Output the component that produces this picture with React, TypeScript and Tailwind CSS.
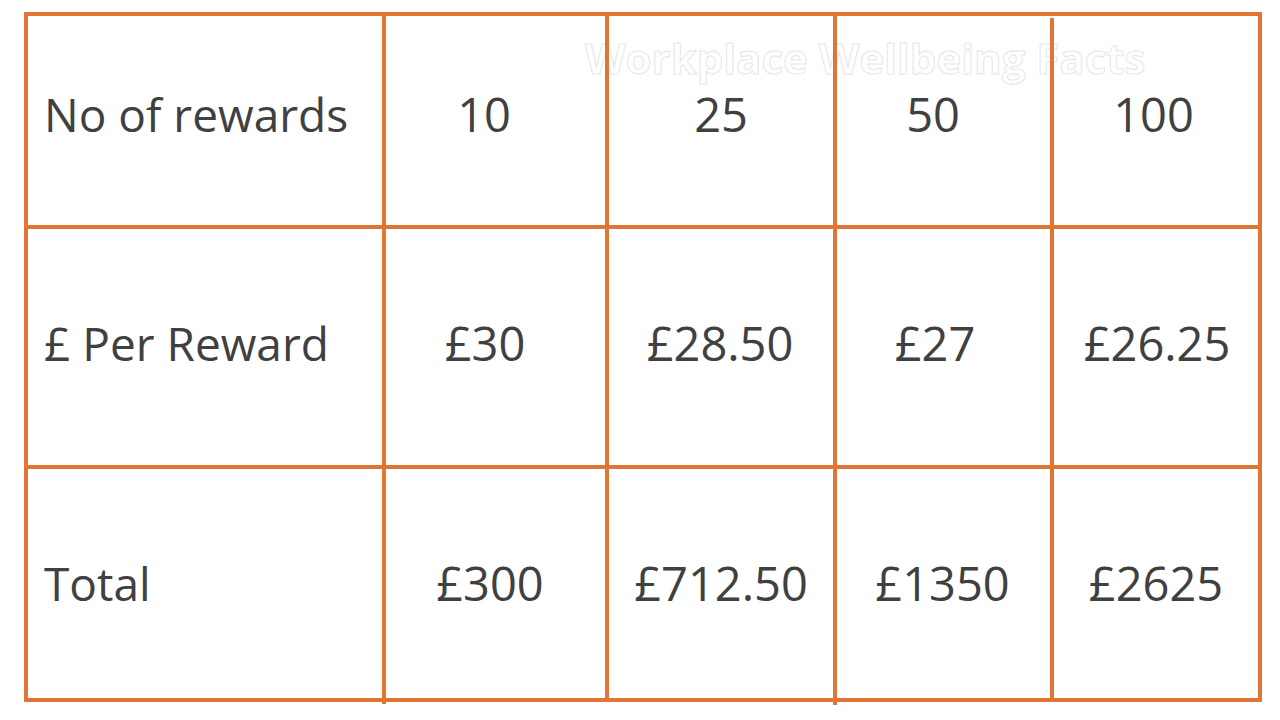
import React from "react";

const ORANGE = "border-[#e07535]";

type Cell = { text: string; cls?: string };

const rows: { label: string; rowCls: string; cells: Cell[] }[] = [
  {
    label: "No of rewards",
    rowCls: "pb-[12px]",
    cells: [
      { text: "10", cls: "pr-[23px]" },
      { text: "25" },
      { text: "50", cls: "pr-[21px]" },
      { text: "100", cls: "pr-[5px]" },
    ],
  },
  {
    label: "£ Per Reward",
    rowCls: "pb-[8px]",
    cells: [
      { text: "£30", cls: "pr-[21px]" },
      { text: "£28.50", cls: "pr-[2px]" },
      { text: "£27", cls: "pr-[17px]" },
      { text: "£26.25", cls: "pl-[2px]" },
    ],
  },
  {
    label: "Total",
    rowCls: "",
    cells: [
      { text: "£300", cls: "pr-[11px]" },
      { text: "£712.50" },
      { text: "£1350", cls: "pr-[2px]" },
      { text: "£2625" },
    ],
  },
];

const rowHeights = ["h-[209px]", "h-[240px] border-t-4", "h-[233px] border-t-4"];

export default function App() {
  return (
    <div
      className="relative w-[1280px] h-[720px] bg-white overflow-hidden"
      style={{ fontFamily: '"Open Sans", "Noto Sans", sans-serif' }}
    >
      {/* faint watermark title */}
      <div className="absolute left-[585px] top-[26px] z-0 text-[42px] font-bold text-white whitespace-nowrap [-webkit-text-stroke:1px_#e6e6e6]">
        Workplace Wellbeing Facts
      </div>

      <div className="relative z-10 pl-[24px] pt-[12px]">
        <div className={`w-[1238px] h-[690px] border-4 ${ORANGE} flex flex-col`}>
          {rows.map((r, i) => (
            <div
              key={r.label}
              className={`grid grid-cols-[354px_223px_228px_217px_208px] ${ORANGE} ${rowHeights[i]}`}
            >
              <div
                className={`flex items-center pl-[16px] text-[46px] text-[#404040] ${r.rowCls}`}
              >
                {r.label}
              </div>
              {r.cells.map((c, j) => (
                <div
                  key={j}
                  className={`flex items-center justify-center border-l-4 ${ORANGE} text-[47px] text-[#404040] ${r.rowCls} ${c.cls ?? ""}`}
                >
                  {c.text}
                </div>
              ))}
            </div>
          ))}
        </div>
      </div>

      {/* small line overshoots below the table */}
      <div className="absolute left-[382px] top-[700px] w-[4px] h-[4px] bg-[#e07535]" />
      <div className="absolute left-[833px] top-[700px] w-[4px] h-[5px] bg-[#e07535]" />
      {/* small gap where the last column line meets the top border */}
      <div className="absolute left-[1050px] top-[16px] w-[4px] h-[2px] bg-white z-20" />
    </div>
  );
}
